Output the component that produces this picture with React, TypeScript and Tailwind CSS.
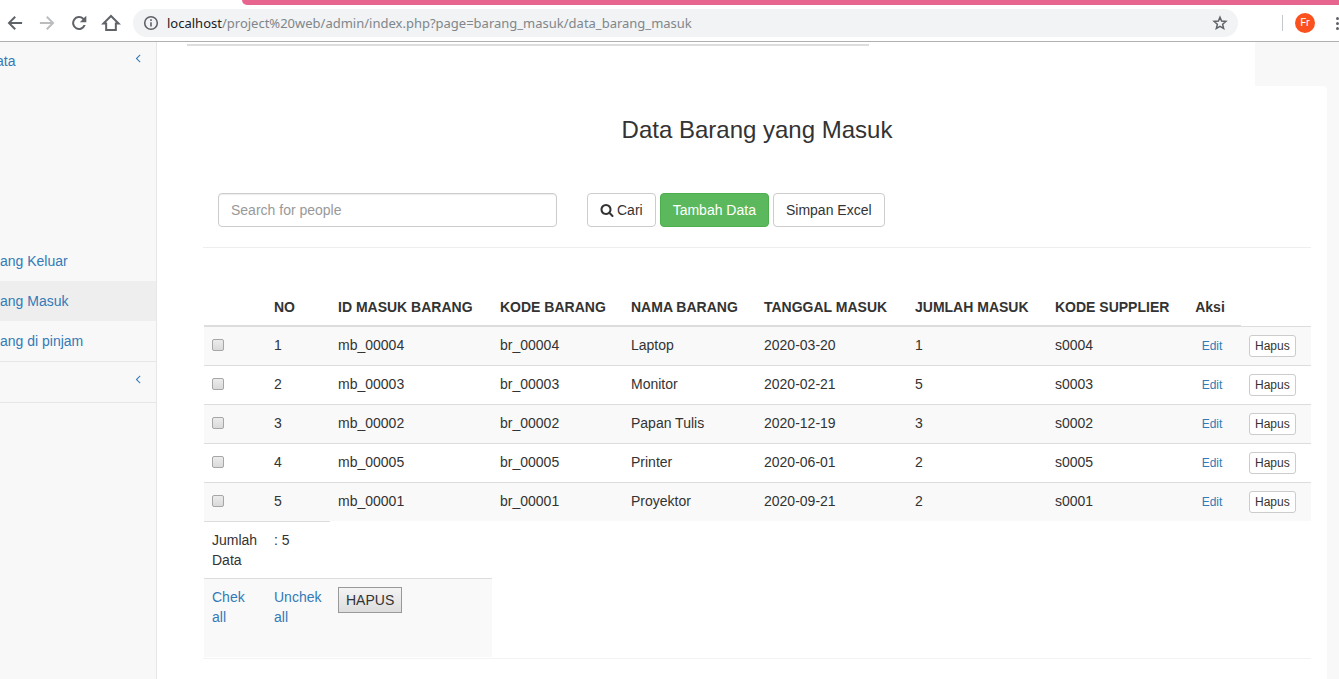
import React from "react";

type Item = {
  id: string;
  kode: string;
  nama: string;
  tanggal: string;
  jumlah: number;
  supplier: string;
};

const items: Item[] = [
  { id: "mb_00004", kode: "br_00004", nama: "Laptop", tanggal: "2020-03-20", jumlah: 1, supplier: "s0004" },
  { id: "mb_00003", kode: "br_00003", nama: "Monitor", tanggal: "2020-02-21", jumlah: 5, supplier: "s0003" },
  { id: "mb_00002", kode: "br_00002", nama: "Papan Tulis", tanggal: "2020-12-19", jumlah: 3, supplier: "s0002" },
  { id: "mb_00005", kode: "br_00005", nama: "Printer", tanggal: "2020-06-01", jumlah: 2, supplier: "s0005" },
  { id: "mb_00001", kode: "br_00001", nama: "Proyektor", tanggal: "2020-09-21", jumlah: 2, supplier: "s0001" },
];

const headings = [
  "NO",
  "ID MASUK BARANG",
  "KODE BARANG",
  "NAMA BARANG",
  "TANGGAL MASUK",
  "JUMLAH MASUK",
  "KODE SUPPLIER",
];

function AngleLeft() {
  return (
    <svg viewBox="0 0 1792 1792" className="size-3.5" fill="currentColor" aria-hidden="true">
      <path d="M1203 544q0 13-10 23l-393 393 393 393q10 10 10 23t-10 23l-50 50q-10 10-23 10t-23-10l-466-466q-10-10-10-23t10-23l466-466q10-10 23-10t23 10l50 50q10 10 10 23z" />
    </svg>
  );
}

function SearchIcon() {
  return (
    <svg viewBox="0 0 1792 1792" className="size-3.5" fill="currentColor" aria-hidden="true">
      <path d="M1216 832q0-185-131.5-316.5T768 384 451.5 515.5 320 832t131.5 316.5T768 1280t316.5-131.5T1216 832zm512 832q0 52-38 90t-90 38q-54 0-90-38l-343-342q-179 124-399 124-143 0-273.5-55.5t-225-150-150-225T64 832t55.5-273.5 150-225 225-150T768 128t273.5 55.5 225 150 150 225T1472 832q0 220-124 399l343 343q37 37 37 90z" />
    </svg>
  );
}

function BrowserBar() {
  return (
    <header className="border-b border-[#b0b0b0] bg-white">
      <div className="flex h-[5px]">
        <div className="w-[242px] shrink-0" />
        <div className="flex-1 rounded-bl-lg bg-[#e76690]" />
      </div>
      <div className="flex h-9 items-center overflow-hidden text-[#5f6368]">
        <div className="flex w-[133px] shrink-0 gap-3 pl-[5px]">
          <button type="button" aria-label="Back">
            <svg viewBox="0 0 24 24" className="size-5" fill="currentColor">
              <path d="M20.5 10.900H7.600l5.500-5.500L11.400 3.700 3.100 12l8.300 8.300 1.700-1.700-5.500-5.500h12.900z" />
            </svg>
          </button>
          <button type="button" aria-label="Forward" className="text-[#babcbe]">
            <svg viewBox="0 0 24 24" className="size-5" fill="currentColor">
              <path d="M3.500 10.900h12.900l-5.500-5.500 1.700-1.700 8.300 8.300-8.300 8.300-1.700-1.700 5.500-5.500H3.500z" />
            </svg>
          </button>
          <button type="button" aria-label="Reload">
            <svg viewBox="0 0 24 24" className="size-5" fill="currentColor">
              <path d="M17.9 6.1A8.3 8.3 0 1 0 20 14.5h-2.6A5.900 5.900 0 1 1 16.200 7.800L13 11h7.8V3.2z" />
            </svg>
          </button>
          <button type="button" aria-label="Home">
            <svg viewBox="0 0 24 24" className="size-5" fill="none" stroke="currentColor" strokeWidth="2.4">
              <path d="M2.800 12.600h3.400V20.400h11.600V12.600h3.400L12 3.600z" />
            </svg>
          </button>
        </div>
        <div className="flex h-7 flex-1 items-center rounded-full bg-[#f1f3f4] px-[10px]">
          <svg viewBox="0 0 16 16" className="size-4 shrink-0" fill="none" stroke="currentColor" strokeWidth="1.6" aria-hidden="true">
            <circle cx="8" cy="8" r="6.300" />
            <path d="M8 7.200V11.500M8 4.300V5.900" />
          </svg>
          <p className="ml-2 flex-1 font-['Noto_Sans',sans-serif] text-[13px] leading-5 whitespace-nowrap text-[#80868b]">
            <span className="text-[#202124]">localhost</span>
            /project%20web/admin/index.php?page=barang_masuk/data_barang_masuk
          </p>
          <button type="button" aria-label="Bookmark">
            <svg viewBox="0 0 16 16" className="size-4" fill="none" stroke="currentColor" strokeWidth="1.5">
              <path d="M8 2.200l1.600 3.900 4.300.35-3.250 2.850 1 4.200L8 11.300l-3.650 2.200 1-4.200L2.100 6.450l4.300-.35z" />
            </svg>
          </button>
        </div>
        <div className="ml-11 h-4 w-px bg-[#c4c7ca]" />
        <div className="ml-3 flex size-5 items-center justify-center rounded-full bg-[#fb511e] font-[Roboto,sans-serif] text-[11px] text-white">
          Fr
        </div>
        <button type="button" aria-label="Menu" className="ml-[21px] flex flex-col gap-0.5">
          <span className="size-[3px] rounded-full bg-[#5f6368]" />
          <span className="size-[3px] rounded-full bg-[#5f6368]" />
          <span className="size-[3px] rounded-full bg-[#5f6368]" />
        </button>
      </div>
    </header>
  );
}

function Sidebar() {
  return (
    <nav className="w-[157px] shrink-0 overflow-hidden border-r border-[#e7e7e7] bg-[#f8f8f8] text-[#337ab7]">
      <a href="#data" className="flex h-[38px] items-center justify-between pr-[11px]">
        <span className="-ml-1">ata</span>
        <span className="pb-1.5">
          <AngleLeft />
        </span>
      </a>
      <ul className="mt-[161px]">
        <li>
          <a href="#keluar" className="flex h-10 items-center">ang Keluar</a>
        </li>
        <li>
          <a href="#masuk" className="flex h-10 items-center bg-[#eeeeee]">ang Masuk</a>
        </li>
        <li>
          <a href="#pinjam" className="flex h-10 items-center">ang di pinjam</a>
        </li>
      </ul>
      <a
        href="#laporan"
        aria-label="Buka menu"
        className="flex h-[42px] items-center justify-end border-y border-[#e7e7e7] pr-[11px] pb-1.5"
      >
        <AngleLeft />
      </a>
    </nav>
  );
}

const button = "h-[34px] rounded border px-3 leading-5";
const cell = "p-2 align-top";

function DataTable() {
  return (
    <table className="mt-[41px] ml-px w-[calc(100%-1px)] table-fixed border-separate border-spacing-0 text-left">
      <colgroup>
        <col className="w-[62px]" />
        <col className="w-[64px]" />
        <col className="w-[162px]" />
        <col className="w-[131px]" />
        <col className="w-[133px]" />
        <col className="w-[151px]" />
        <col className="w-[140px]" />
        <col className="w-[132px]" />
        <col className="w-[62px]" />
        <col />
      </colgroup>
      <thead>
        <tr>
          <th className="border-b-2 border-[#ddd] p-2" />
          {headings.map((h) => (
            <th key={h} className="border-b-2 border-[#ddd] p-2 font-bold whitespace-nowrap">
              {h}
            </th>
          ))}
          <th className="border-b-2 border-[#ddd] p-2 text-center font-bold">Aksi</th>
          <td className="border-b border-[#ddd]" />
        </tr>
      </thead>
      <tbody>
        {items.map((item, i) => (
          <tr
            key={item.id}
            className="border-[#ddd] odd:bg-[#f9f9f9] [&:not(:first-child)>td]:border-t [&>td]:border-[#ddd]"
          >
            <td className={cell}>
              <input
                type="checkbox"
                aria-label={item.id}
                className="mt-1 block size-3 appearance-none rounded-xs border border-[#a6a6a6] bg-linear-to-b from-[#ececec] to-[#dadada] checked:from-[#337ab7] checked:to-[#337ab7]"
              />
            </td>
            <td className={cell}>{i + 1}</td>
            <td className={cell}>{item.id}</td>
            <td className={cell}>{item.kode}</td>
            <td className={cell}>{item.nama}</td>
            <td className={cell}>{item.tanggal}</td>
            <td className={cell}>{item.jumlah}</td>
            <td className={cell}>{item.supplier}</td>
            <td className="py-2 pr-2 pl-3 text-center align-top text-xs leading-[22px]">
              <a href="#edit" className="text-[#337ab7]">Edit</a>
            </td>
            <td className="px-2 py-2 align-top">
              <button
                type="button"
                className="block h-[22px] rounded-[3px] border border-[#ccc] bg-white px-[5px] text-xs leading-5"
              >
                Hapus
              </button>
            </td>
          </tr>
        ))}
        <tr>
          <td className="border-t border-[#ddd] p-2 align-top">Jumlah Data</td>
          <td className="border-t border-[#ddd] p-2 align-top">: 5</td>
        </tr>
        <tr className="h-[79px]">
          <td className="border-t border-[#ddd] bg-[#f9f9f9] p-2 align-top">
            <a href="#chek" className="text-[#337ab7]">
              Chek
              <br />
              all
            </a>
          </td>
          <td className="border-t border-[#ddd] bg-[#f9f9f9] p-2 align-top">
            <a href="#unchek" className="text-[#337ab7]">
              Unchek
              <br />
              all
            </a>
          </td>
          <td className="border-t border-[#ddd] bg-[#f9f9f9] p-2 align-top">
            <button
              type="button"
              className="block h-[26px] border border-[#999] bg-linear-to-b from-[#f4f4f4] to-[#dddddd] px-[7px]"
            >
              HAPUS
            </button>
          </td>
        </tr>
      </tbody>
    </table>
  );
}

export default function App() {
  return (
    <div className="flex min-h-screen flex-col overflow-hidden bg-[#f8f8f8] font-['Liberation_Sans',Arial,sans-serif] text-sm leading-5 text-[#333]">
      <BrowserBar />
      <div className="flex flex-1">
        <Sidebar />
        <main className="flex min-w-0 flex-1 flex-col">
          <div className="mr-[84px] h-11 bg-white pt-0.5 pl-[30px]">
            <div className="h-0.5 w-[682px] bg-[#ddd]" />
          </div>
          <section className="mr-3 flex-1 rounded-tr bg-white pt-[31px] pr-4 pb-5 pl-[46px]">
            <h1 className="text-center text-2xl leading-[26px]">Data Barang yang Masuk</h1>
            <form className="mt-[50px] flex border-b border-[#eee] pb-5 pl-[15px]" onSubmit={(e) => e.preventDefault()}>
              <input
                type="text"
                aria-label="Search for people"
                placeholder="Search for people"
                className="h-[34px] w-[339px] rounded border border-[#ccc] px-3 shadow-[inset_0_1px_1px_rgba(0,0,0,0.075)] placeholder:text-[#999]"
              />
              <div className="ml-[30px] flex gap-1">
                <button type="submit" className={`${button} flex items-center gap-[3px] border-[#ccc] bg-white`}>
                  <SearchIcon />
                  Cari
                </button>
                <button type="button" className={`${button} border-[#4cae4c] bg-[#5cb85c] text-white`}>
                  Tambah Data
                </button>
                <button type="button" className={`${button} border-[#ccc] bg-white`}>
                  Simpan Excel
                </button>
              </div>
            </form>
            <DataTable />
            <hr className="mt-px border-[#f3f3f3]" />
          </section>
        </main>
      </div>
    </div>
  );
}
